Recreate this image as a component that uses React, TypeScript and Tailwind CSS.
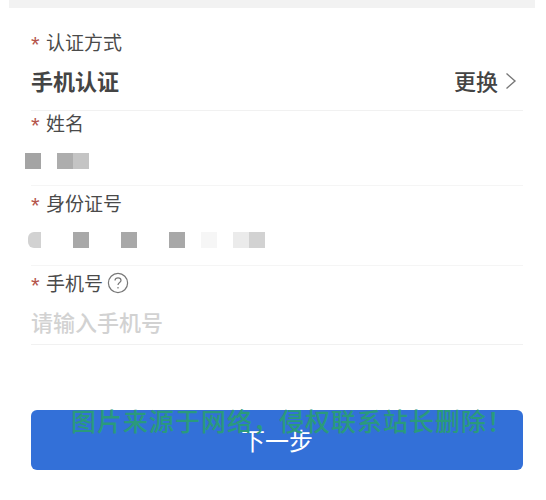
const font = { fontFamily: '"Noto Sans CJK SC", sans-serif' };
const starFont = { fontFamily: '"Liberation Sans", sans-serif' };

const nameCells = ["bg-[#a4a4a4]", "", "bg-[#adadad]", "bg-[#c4c4c4]"];
const idCells = [
  "bg-[#d2d2d2] rounded-l-[6px] ml-[3px]",
  "",
  "",
  "bg-[#a8a8a8]",
  "",
  "",
  "bg-[#a8a8a8]",
  "",
  "",
  "bg-[#a8a8a8]",
  "",
  "bg-[#f6f6f6]",
  "",
  "bg-[#ebebeb]",
  "bg-[#d2d2d2]",
];

function Label({ text, children }: { text: string; children?: React.ReactNode }) {
  return (
    <div className="flex items-center h-[24px] text-[19px] leading-[24px] text-[#4a4a4a]">
      <span className="w-[15px] h-[24px] leading-[30px] text-[#b5544c] text-[22px]" style={starFont}>*</span>
      <span>{text}</span>
      {children}
    </div>
  );
}

function Masked({ cells }: { cells: string[] }) {
  return (
    <div className="flex h-[16px] -ml-[6px] blur-[0.3px]">
      {cells.map((c, i) => (
        <div key={i} className="flex w-[16px] h-[16px]">
          {c && <div className={`flex-1 ${c}`} />}
        </div>
      ))}
    </div>
  );
}

export default function App() {
  return (
    <div className="relative w-[546px] h-[500px] bg-white overflow-hidden" style={font}>
      <div className="ml-[9px] w-[526px] h-[8px] bg-[#f2f2f2]" />

      <div className="ml-[31px] w-[492px]">
        {/* auth method */}
        <div className="pt-[22px] h-[103px] border-b border-[#f1f1f1]">
          <Label text="认证方式" />
          <div className="flex items-center justify-between h-[32px] mt-[10px] text-[#444]">
            <span className="text-[22px] leading-[32px] font-bold">手机认证</span>
            <span className="flex items-center text-[22px] leading-[32px] font-medium">
              更换
              <svg width="12" height="18" viewBox="0 0 12 18" className="ml-[7px] mr-[6px] mt-[1px]" fill="none" stroke="#777" strokeWidth="1.4">
                <path d="M1.5 1.5 L10 9 L1.5 16.5" />
              </svg>
            </span>
          </div>
        </div>

        {/* name */}
        <div className="h-[75px] border-b border-[#f5f5f5]">
          <Label text="姓名" />
          <div className="mt-[18px]">
            <Masked cells={nameCells} />
          </div>
        </div>

        {/* id number */}
        <div className="h-[80px] pt-[5px] border-b border-[#f5f5f5]">
          <Label text="身份证号" />
          <div className="mt-[17px]">
            <Masked cells={idCells} />
          </div>
        </div>

        {/* phone */}
        <div className="h-[79px] pt-[5px] border-b border-[#f1f1f1]">
          <Label text="手机号">
            <svg width="22" height="22" viewBox="0 0 22 22" className="ml-[4px]" fill="none" stroke="#777" strokeWidth="1.2">
              <circle cx="11" cy="11" r="9.6" />
              <path d="M8 8.6 C8 6.8 9.4 5.8 11 5.8 C12.7 5.8 14 6.9 14 8.4 C14 10.4 11 10.6 11 13" />
              <path d="M11 15 V16.6" />
            </svg>
          </Label>
          <div className="mt-[10px] text-[22px] leading-[32px] font-medium text-[#d2d2d2]">请输入手机号</div>
        </div>

        <button className="block mt-[65px] w-full h-[60px] rounded-[6px] bg-[#3370d8] text-white text-[24px] leading-[56px]">
          下一步
        </button>
      </div>

      {/* watermark */}
      <div className="absolute left-[71px] top-[403px] text-[25px] tracking-[1px] font-medium leading-[34px] whitespace-nowrap text-[#2a9a7c]">
        图片来源于网络，侵权联系站长删除！
      </div>
    </div>
  );
}
